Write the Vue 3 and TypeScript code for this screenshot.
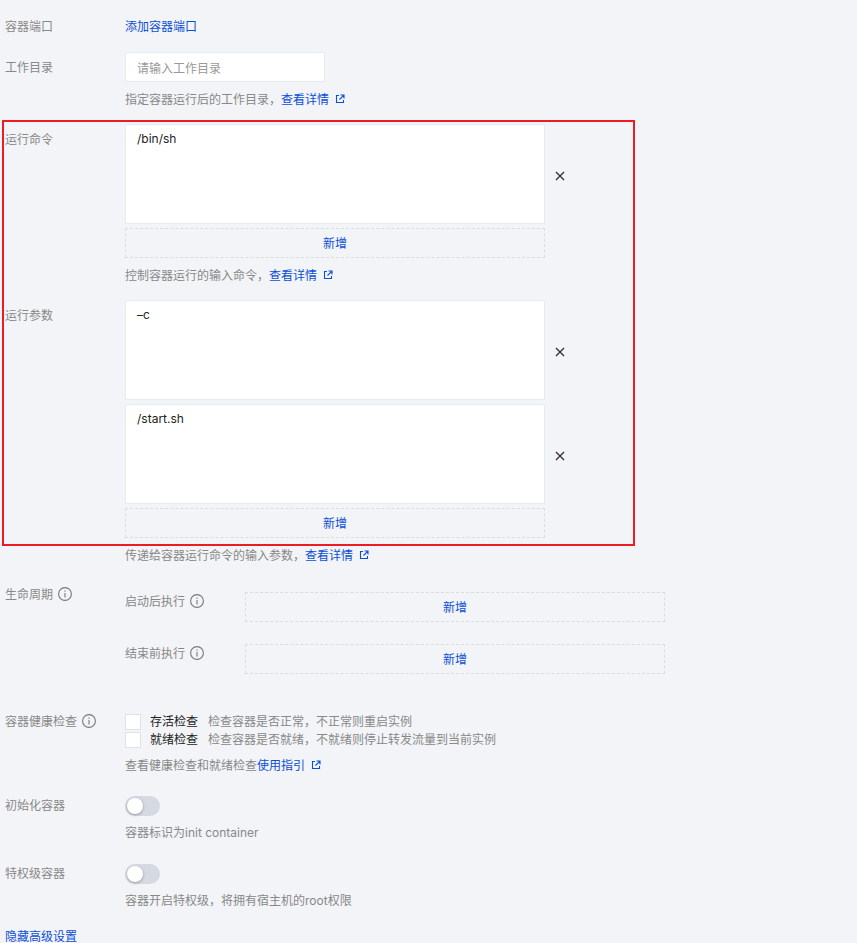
<script setup lang="ts">
const checks = [
  { name: '存活检查', desc: '检查容器是否正常\uFF0C不正常则重启实例' },
  { name: '就绪检查', desc: '检查容器是否就绪\uFF0C不就绪则停止转发流量到当前实例' },
]
const hooks = ['启动后执行', '结束前执行']
</script>

<template>
  <div class="page">
    <div class="row first">
      <div class="label">容器端口</div>
      <div class="body"><a class="link">添加容器端口</a></div>
    </div>

    <div class="row workdir">
      <div class="label tall">工作目录</div>
      <div class="body">
        <input class="input" placeholder="请输入工作目录" />
        <p class="help">指定容器运行后的工作目录&#xFF0C;<a class="link">查看详情</a><svg class="ext" viewBox="0 0 10 10"><path d="M4 1.5H1.5v7h7V6M5.5 1h3.5v3.5M8.7 1.3 4.5 5.5" /></svg></p>
      </div>
    </div>

    <div class="row">
      <div class="label pad">运行命令</div>
      <div class="body">
        <div class="area-row">
          <div class="area">/bin/sh</div>
          <svg class="close" viewBox="0 0 10 10"><path d="M1 1l8 8M9 1l-8 8" /></svg>
        </div>
        <button class="add">新增</button>
        <p class="help">控制容器运行的输入命令&#xFF0C;<a class="link">查看详情</a><svg class="ext" viewBox="0 0 10 10"><path d="M4 1.5H1.5v7h7V6M5.5 1h3.5v3.5M8.7 1.3 4.5 5.5" /></svg></p>
      </div>
    </div>

    <div class="row">
      <div class="label pad">运行参数</div>
      <div class="body">
        <div class="area-row">
          <div class="area">–c</div>
          <svg class="close" viewBox="0 0 10 10"><path d="M1 1l8 8M9 1l-8 8" /></svg>
        </div>
        <div class="area-row next">
          <div class="area">/start.sh</div>
          <svg class="close" viewBox="0 0 10 10"><path d="M1 1l8 8M9 1l-8 8" /></svg>
        </div>
        <button class="add">新增</button>
        <p class="help">传递给容器运行命令的输入参数&#xFF0C;<a class="link">查看详情</a><svg class="ext" viewBox="0 0 10 10"><path d="M4 1.5H1.5v7h7V6M5.5 1h3.5v3.5M8.7 1.3 4.5 5.5" /></svg></p>
      </div>
    </div>

    <div class="row life">
      <div class="label">生命周期<svg class="info" viewBox="0 0 14 14"><circle cx="7" cy="7" r="6.4" /><path d="M7 6v4.4M7 3.4v1.4" /></svg></div>
      <div class="body hooks">
        <div v-for="hook in hooks" :key="hook" class="hook">
          <div class="hook-label">{{ hook }}<svg class="info" viewBox="0 0 14 14"><circle cx="7" cy="7" r="6.4" /><path d="M7 6v4.4M7 3.4v1.4" /></svg></div>
          <button class="add wide">新增</button>
        </div>
      </div>
    </div>

    <div class="row health">
      <div class="label">容器健康检查<svg class="info" viewBox="0 0 14 14"><circle cx="7" cy="7" r="6.4" /><path d="M7 6v4.4M7 3.4v1.4" /></svg></div>
      <div class="body">
        <div class="checks">
          <div v-for="c in checks" :key="c.name" class="check">
            <span class="box"></span>
            <span class="check-name">{{ c.name }}</span>
            <span class="check-desc">{{ c.desc }}</span>
          </div>
        </div>
        <p class="help">查看健康检查和就绪检查<a class="link">使用指引</a><svg class="ext" viewBox="0 0 10 10"><path d="M4 1.5H1.5v7h7V6M5.5 1h3.5v3.5M8.7 1.3 4.5 5.5" /></svg></p>
      </div>
    </div>

    <div class="row toggle-row">
      <div class="label">初始化容器</div>
      <div class="body">
        <span class="switch"><span class="knob"></span></span>
        <p class="help tight">容器标识为init container</p>
      </div>
    </div>

    <div class="row toggle-row second">
      <div class="label">特权级容器</div>
      <div class="body">
        <span class="switch"><span class="knob"></span></span>
        <p class="help tight">容器开启特权级&#xFF0C;将拥有宿主机的root权限</p>
      </div>
    </div>

    <a class="link hide">隐藏高级设置</a>

    <div class="highlight"></div>
  </div>
</template>

<style>
html, body {
  margin: 0;
  background: #f3f4f7;
}
</style>

<style scoped>
.page {
  position: relative;
  box-sizing: border-box;
  height: 943px;
  overflow: hidden;
  padding: 16px 0 0 5px;
  background: #f3f4f7;
  font: 12px/20px "Noto Sans CJK SC", sans-serif;
  color: #888;
}
.row {
  display: flex;
  margin-bottom: 15px;
}
.row.first { margin-bottom: 16px; }
.label {
  flex: none;
  width: 120px;
  display: flex;
  align-items: center;
  align-self: flex-start;
  color: #888;
}
.label.tall { line-height: 30px; }
.label.pad { padding-top: 5px; }
.body { flex: 1; min-width: 0; }
.link { color: #0a4fd8; cursor: pointer; }
.input {
  display: block;
  box-sizing: border-box;
  width: 200px;
  height: 30px;
  padding: 0 11px;
  border: 1px solid #e7eaef;
  background: #fff;
  font: inherit;
  color: #333;
  outline: none;
}
.input::placeholder { color: #999; opacity: 1; }
.help { margin: 7px 0 0; color: #888; display: flex; align-items: center; }
.help.tight { margin-top: 7px; font-family: Inter, "Noto Sans CJK SC", sans-serif; }
.ext {
  width: 10px;
  height: 10px;
  margin-left: 6px;
  fill: none;
  stroke: #0a4fd8;
  stroke-width: 1.1;
}
.area-row { display: flex; align-items: center; }
.area-row.next { margin-top: 4px; }
.area {
  box-sizing: border-box;
  width: 420px;
  height: 100px;
  padding: 4px 11px;
  border: 1px solid #e7eaef;
  background: #fff;
  color: #222;
  font-family: Inter, sans-serif;
}
.close {
  width: 10px;
  height: 10px;
  margin: 4px 0 0 10px;
  fill: none;
  stroke: #333;
  stroke-width: 1.4;
}
.add {
  display: block;
  box-sizing: border-box;
  width: 420px;
  height: 30px;
  margin-top: 4px;
  padding: 0;
  border: 1px dashed #d9dce3;
  background: transparent;
  font: 12px/28px "Noto Sans CJK SC", sans-serif;
  color: #0a4fd8;
}
.add.wide { margin-top: 0; }
.row.life { margin-top: 19px; margin-bottom: 0; height: 127px; }
.hooks { padding-top: 8px; }
.hook { display: flex; height: 52px; align-items: flex-start; }
.hook-label {
  width: 120px;
  display: flex;
  align-items: center;
  line-height: 18px;
  color: #888;
}
.info {
  width: 14px;
  height: 14px;
  margin-left: 5px;
  fill: none;
  stroke: #777;
  stroke-width: 1.1;
}
.row.health { margin-bottom: 21px; }
.checks { padding-top: 3px; }
.check { display: flex; align-items: center; height: 16px; margin-bottom: 2px; }
.box {
  box-sizing: border-box;
  flex: none;
  width: 16px;
  height: 16px;
  border: 1px solid #dfe2ea;
  background: #fff;
  margin-right: 9px;
}
.check-name { color: #222; margin: 0 10px 2px 0; }
.check-desc { color: #888; margin-bottom: 2px; }
.row.health .help { margin-top: 7px; }
.row.toggle-row { margin-bottom: 0; }
.row.toggle-row .label { margin-top: -1px; }
.row.second { margin-top: 21px; }
.switch {
  display: block;
  position: relative;
  width: 35px;
  height: 20px;
  border-radius: 10px;
  background: #d5d9e2;
}
.knob {
  position: absolute;
  left: 2px;
  top: 2px;
  width: 16px;
  height: 16px;
  border-radius: 50%;
  background: #fff;
  box-shadow: 0 1px 3px rgba(0, 0, 0, 0.3);
}
.hide {
  display: block;
  margin-top: 15px;
}
.highlight {
  position: absolute;
  left: 2px;
  top: 120px;
  box-sizing: border-box;
  width: 633px;
  height: 426px;
  border: 2px solid #ed1c24;
  pointer-events: none;
}
</style>
